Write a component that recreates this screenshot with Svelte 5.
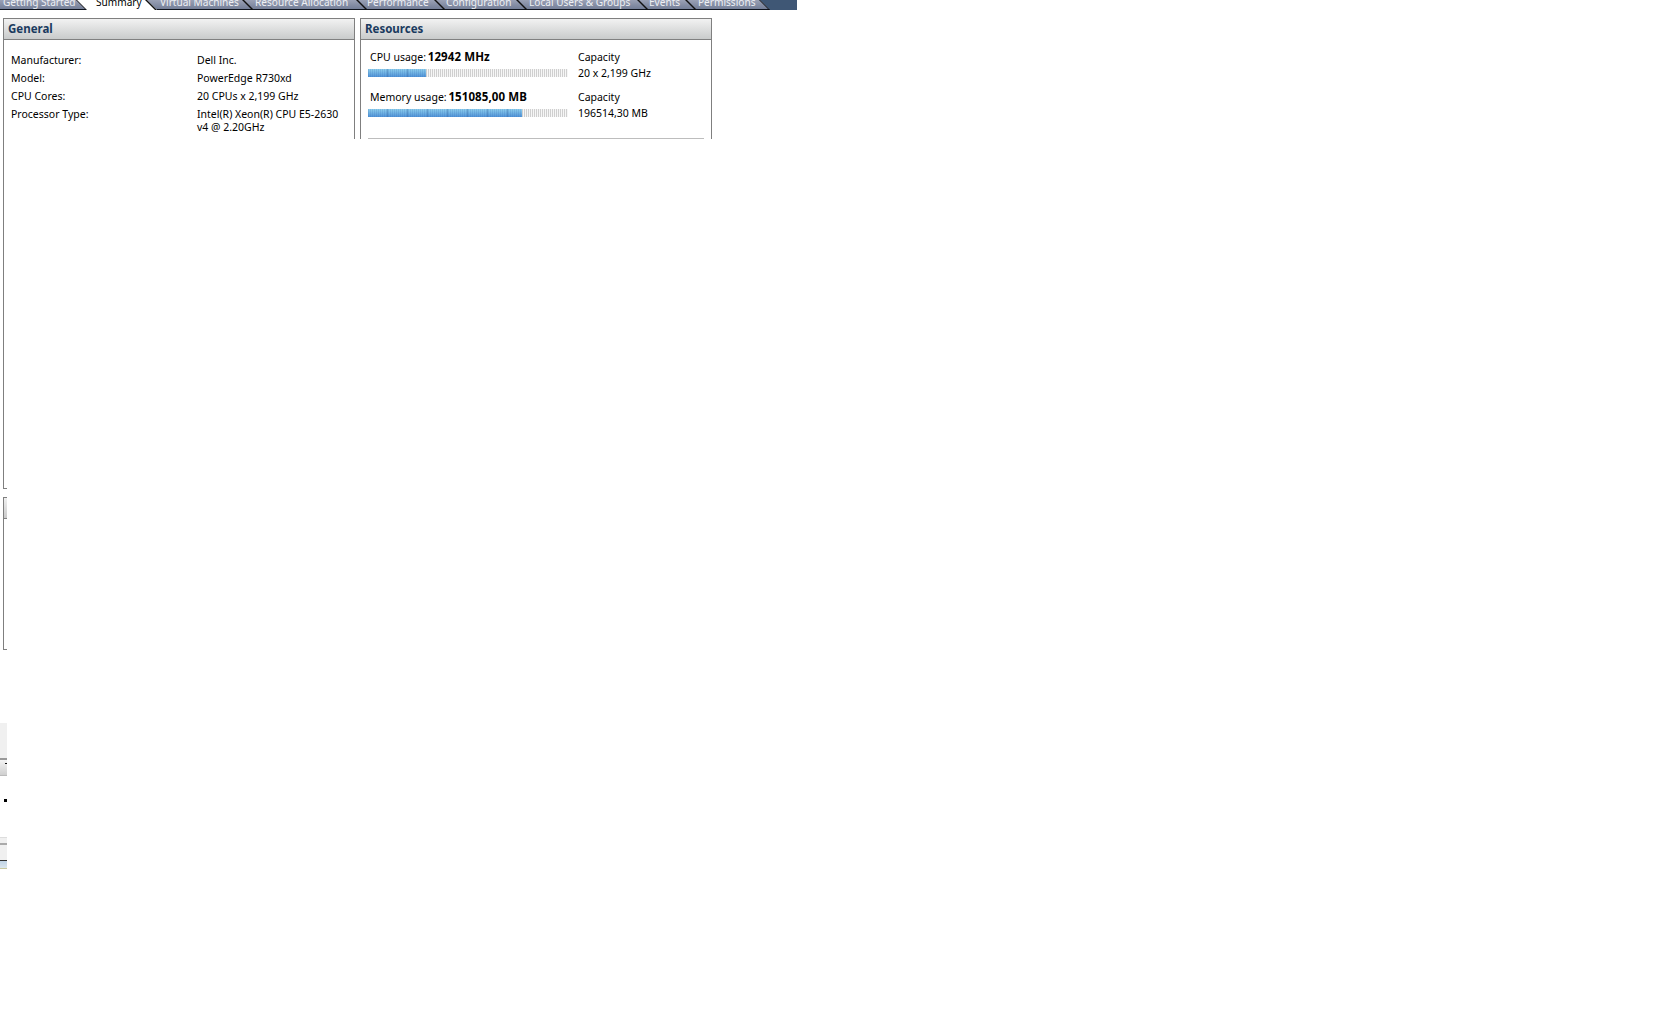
<script>
  // ESX host Summary tab, cropped: only the top panels and a sliver of the left edge are visible
  const tabs = [
    { label: "Getting Started", width: 87, pad: 3 },
    { label: "Summary", width: 70, pad: 9, active: true },
    { label: "Virtual Machines", width: 96, pad: 3 },
    { label: "Resource Allocation", width: 114, pad: 2 },
    { label: "Performance", width: 78, pad: 0 },
    { label: "Configuration", width: 82, pad: 1 },
    { label: "Local Users & Groups", width: 121, pad: 2 },
    { label: "Events", width: 48, pad: 1 },
    { label: "Permissions", width: 74, pad: 2 }
  ];

  const general = [
    ["Manufacturer:", "Dell Inc."],
    ["Model:", "PowerEdge R730xd"],
    ["CPU Cores:", "20 CPUs x 2,199 GHz"],
    ["Processor Type:", "Intel(R) Xeon(R) CPU E5-2630 v4 @ 2.20GHz"]
  ];

  const usage = [
    { name: "CPU usage:", value: "12942 MHz", fill: 29, capacity: "20 x 2,199 GHz" },
    { name: "Memory usage:", value: "151085,00 MB", fill: 77, capacity: "196514,30 MB" }
  ];
</script>

<div class="page">
  <nav class="tabbar">
    <div class="tabs">
      {#each tabs as tab}
        <div class="tab" class:active={tab.active} style="width:{tab.width}px;padding-left:{tab.pad}px">
          <span>{tab.label}</span>
        </div>
      {/each}
    </div>
  </nav>

  <div class="panels">
    <section class="panel general">
      <h2>General</h2>
      <dl>
        {#each general as [key, value]}
          <dt>{key}</dt>
          <dd>{value}</dd>
        {/each}
      </dl>
    </section>

    <section class="panel resources">
      <h2>Resources</h2>
      <div class="meters">
        {#each usage as item}
          <div class="meter">
            <div class="usage">
              <div class="usage-label">{item.name} <b>{item.value}</b></div>
              <div class="bar"><div class="bar-fill" style="width:{item.fill}%"></div></div>
            </div>
            <div class="capacity">
              <div>Capacity</div>
              <div>{item.capacity}</div>
            </div>
          </div>
        {/each}
      </div>
      <hr />
    </section>
  </div>

  <div class="edge">
    <div class="edge-box first"></div>
    <div class="edge-box second"><div class="edge-head"></div></div>
    <div class="strip one"></div>
    <div class="strip-line"></div>
    <div class="strip-head"><i></i></div>
    <div class="dot"></div>
    <div class="strip two"></div>
    <div class="strip-line thin"></div>
    <div class="strip three"></div>
    <div class="strip-blue"></div>
  </div>
</div>

<style>
  :global(body) {
    margin: 0;
    background: #fff;
  }

  .page {
    width: 1680px;
    height: 1018px;
    overflow: hidden;
    background: #fff;
    color: #000;
    font-family: "Noto Sans", "DejaVu Sans", sans-serif;
    font-size: 10.5px;
  }

  .tabbar {
    width: 797px;
    height: 10px;
    background: #3f5775;
    overflow: hidden;
  }

  .tabs {
    display: flex;
    width: 770px;
    height: 10px;
    background: linear-gradient(#9aa1b5, #6f7a94);
    clip-path: polygon(0 0, 760px 0, 770px 100%, 0 100%);
  }

  .tab {
    position: relative;
    box-sizing: border-box;
    flex: none;
    height: 10px;
    border-bottom: 1px solid #10151f;
    color: #eef0f4;
    font-size: 10.1px;
    line-height: 5px;
    white-space: nowrap;
  }

  .tab span {
    position: relative;
    z-index: 1;
  }

  .tab::after {
    content: "";
    position: absolute;
    top: 0;
    right: 0;
    bottom: -1px;
    width: 1.5px;
    background: #111;
    transform: skewX(45deg);
    transform-origin: bottom;
  }

  .tab.active {
    border-bottom: 0;
    color: #000;
  }

  .tab.active::before {
    content: "";
    position: absolute;
    inset: 0;
    background: #fff;
    transform: skewX(45deg);
    transform-origin: bottom;
  }

  .panels {
    display: flex;
    gap: 5px;
    height: 121px;
    margin: 8px 0 0 3px;
  }

  .panel {
    box-sizing: border-box;
    width: 352px;
    height: 121px;
    overflow: hidden;
    border: 1px solid #7f7f7f;
    border-bottom: 0;
  }

  h2 {
    box-sizing: border-box;
    height: 21px;
    margin: 0;
    padding-left: 4px;
    border-bottom: 1px solid #808080;
    background: linear-gradient(#f2f2f2, #c9cbcb);
    color: #1a3a5e;
    font-size: 11.5px;
    font-weight: 700;
    line-height: 20px;
  }

  dl {
    display: grid;
    grid-template-columns: 186px 1fr;
    grid-auto-rows: 18px;
    margin: 14px 0 0;
    padding: 0 7px;
    line-height: 13px;
  }

  dt, dd {
    margin: 0;
  }

  .meters {
    display: flex;
    flex-direction: column;
    gap: 8px;
    margin: 10px 0 0 7px;
  }

  .meter {
    display: flex;
    gap: 10px;
    height: 32px;
  }

  .usage {
    width: 200px;
  }

  .usage-label {
    height: 19px;
    padding-left: 2px;
    line-height: 14px;
  }

  .usage-label b {
    margin-left: -1px;
    font-size: 11.5px;
    letter-spacing: 0.1px;
  }

  .bar {
    height: 8px;
    background: repeating-linear-gradient(90deg, #cfcfcf 0 1px, #f6f6f6 1px 2px);
  }

  .bar-fill {
    height: 100%;
    background:
      repeating-linear-gradient(90deg, transparent 0 19px, rgba(40, 90, 150, 0.35) 19px 20px),
      repeating-linear-gradient(90deg, rgba(50, 100, 170, 0.18) 0 1px, transparent 1px 2px),
      linear-gradient(#8fd0ee, #4f93d8);
  }

  .capacity {
    margin-top: -1px;
    line-height: 16px;
  }

  hr {
    height: 1px;
    margin: 16px 7px 0;
    border: 0;
    background: #bdbdbd;
  }

  .edge {
    display: flex;
    flex-direction: column;
    width: 7px;
  }

  .edge-box {
    box-sizing: border-box;
    margin-left: 3px;
    width: 4px;
    border-left: 1px solid #7f7f7f;
  }

  .edge-box.first {
    height: 350px;
    border-bottom: 1px solid #7f7f7f;
  }

  .edge-box.second {
    height: 153px;
    margin-top: 8px;
    border-top: 1px solid #7f7f7f;
    border-bottom: 1px solid #7f7f7f;
  }

  .edge-head {
    height: 21px;
    border-bottom: 1px solid #808080;
    background: linear-gradient(#f0f0f0, #cbcbcb);
    box-sizing: border-box;
  }

  .strip {
    background: #f0f0f0;
  }

  .strip.one {
    height: 35px;
    margin-top: 73px;
  }

  .strip-line {
    height: 2px;
    background: #999;
  }

  .strip-line.thin {
    background: #aaa;
  }

  .strip-head {
    box-sizing: border-box;
    height: 16px;
    padding: 3px 0 0 5px;
    border-bottom: 1px solid #bbb;
    background: linear-gradient(#f4f4f4, #cfcfcf);
  }

  .strip-head i {
    display: block;
    width: 2px;
    height: 1px;
    background: #111;
  }

  .dot {
    width: 3px;
    height: 3px;
    margin: 23px 0 0 4px;
    background: #000;
  }

  .strip.two {
    box-sizing: border-box;
    height: 6px;
    margin-top: 35px;
    border-top: 1px solid #ddd;
  }

  .strip.three {
    height: 15px;
  }

  .strip-blue {
    box-sizing: border-box;
    height: 9px;
    border-top: 1px solid #333;
    border-bottom: 1px solid #c8c8a0;
    background: linear-gradient(#bfd3e6, #dbe6ee);
  }
</style>
